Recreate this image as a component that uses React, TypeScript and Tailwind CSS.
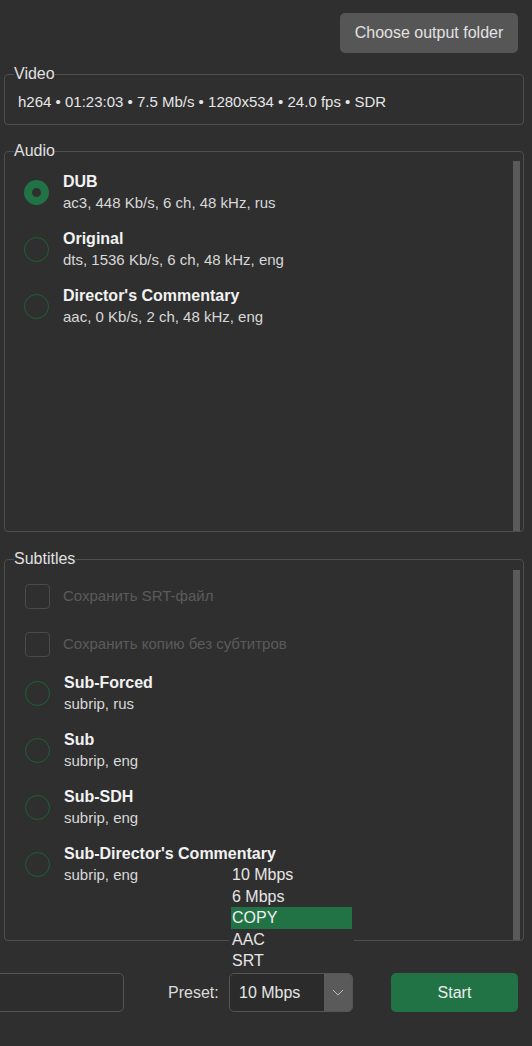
import { useState } from "react";

type Track = { title: string; info: string };

const audioTracks: Track[] = [
  { title: "DUB", info: "ac3, 448 Kb/s, 6 ch, 48 kHz, rus" },
  { title: "Original", info: "dts, 1536 Kb/s, 6 ch, 48 kHz, eng" },
  { title: "Director's Commentary", info: "aac, 0 Kb/s, 2 ch, 48 kHz, eng" },
];

const subTracks: Track[] = [
  { title: "Sub-Forced", info: "subrip, rus" },
  { title: "Sub", info: "subrip, eng" },
  { title: "Sub-SDH", info: "subrip, eng" },
  { title: "Sub-Director's Commentary", info: "subrip, eng" },
];

const presets = ["10 Mbps", "6 Mbps", "COPY", "AAC", "SRT"];

const Radio = ({ checked }: { checked: boolean }) =>
  checked ? (
    <span className="h-[25px] w-[25px] shrink-0 rounded-full border-[8px] border-[#217346]" />
  ) : (
    <span className="h-[25px] w-[25px] shrink-0 rounded-full border-[1.5px] border-[#1d6139]" />
  );

const TrackRow = ({ track, checked }: { track: Track; checked: boolean }) => (
  <div className="flex items-center gap-[14px]">
    <Radio checked={checked} />
    <div className="flex flex-col">
      <span className="text-[16px] font-bold leading-[21px] text-[#f2f2f2]">
        {track.title}
      </span>
      <span className="text-[15px] leading-[22px] text-[#d8d8d8]">
        {track.info}
      </span>
    </div>
  </div>
);

const Checkbox = ({ label }: { label: string }) => (
  <div className="flex h-[25px] items-center gap-[13px]">
    <span className="h-[25px] w-[25px] shrink-0 rounded-[4px] border border-[#4a4a4a]" />
    <span className="text-[15px] text-[#5b5b5b]">{label}</span>
  </div>
);

export default function App() {
  const [audio] = useState(0);
  const [preset] = useState("10 Mbps");

  return (
    <div className="relative h-[1046px] w-[532px] overflow-hidden bg-[#2f2f2f] font-['Liberation_Sans',Arial,sans-serif] text-[#e0e0e0]">
      <div className="flex justify-end pr-[14px] pt-[13px]">
        <button className="h-[40px] w-[178px] rounded-[5px] bg-[#565656] text-[16px] text-[#e2e2e2]">
          Choose output folder
        </button>
      </div>

      <fieldset className="mx-[4px] mt-[12px] w-[520px] rounded-[4px] border border-[#4e4e4e] p-0">
        <legend className="ml-[9px] px-0 text-[16px] leading-[18px]">Video</legend>
        <div className="pb-[14px] pl-[13px] pt-[10px] text-[15px] leading-[17px] text-[#e6e6e6]">
          h264 • 01:23:03 • 7.5 Mb/s • 1280x534 • 24.0 fps • SDR
        </div>
      </fieldset>

      <fieldset className="mx-[4px] mt-[17px] w-[520px] rounded-[4px] border border-[#4e4e4e] p-0">
        <legend className="ml-[9px] px-0 text-[16px] leading-[18px]">Audio</legend>
        <div className="flex h-[371px]">
          <div className="flex flex-1 flex-col gap-[14px] pl-[19px] pt-[11px]">
            {audioTracks.map((t, i) => (
              <TrackRow key={t.title} track={t} checked={i === audio} />
            ))}
          </div>
          <div className="mr-[3px] mt-[1px] w-[7px] bg-[#5a5a5a]" />
        </div>
      </fieldset>

      <fieldset className="mx-[4px] mt-[18px] w-[520px] rounded-[4px] border border-[#4e4e4e] p-0">
        <legend className="ml-[9px] px-0 text-[16px] leading-[18px]">Subtitles</legend>
        <div className="flex h-[372px]">
          <div className="flex flex-1 flex-col pl-[20px] pt-[16px]">
            <div className="flex flex-col gap-[23px]">
              <Checkbox label="Сохранить SRT-файл" />
              <Checkbox label="Сохранить копию без субтитров" />
            </div>
            <div className="mt-[15px] flex flex-col gap-[14px]">
              {subTracks.map((t) => (
                <TrackRow key={t.title} track={t} checked={false} />
              ))}
            </div>
          </div>
          <div className="mr-[3px] mt-[2px] w-[7px] bg-[#5a5a5a]" />
        </div>
      </fieldset>

      <div className="mt-[32px] flex h-[39px] items-center">
        <div className="-ml-[10px] h-[39px] w-[134px] shrink-0 rounded-[5px] border border-[#555555] bg-[#2d2d2d]" />
        <span className="ml-[44px] w-[53px] shrink-0 text-[16px] text-[#dcdcdc]">Preset:</span>
        <div className="ml-[8px] flex h-[39px] w-[124px] shrink-0 overflow-hidden rounded-[5px] border border-[#555555] bg-[#2b2b2b]">
          <span className="flex flex-1 items-center pl-[9px] text-[16px] text-[#e6e6e6]">
            {preset}
          </span>
          <span className="flex w-[28px] items-center justify-center bg-[#5a5a5a]">
            <svg width="12" height="7" viewBox="0 0 12 7" fill="none">
              <polyline points="1,1 6,6 11,1" stroke="#bdbdbd" strokeWidth="1" />
            </svg>
          </span>
        </div>
        <button className="ml-[38px] h-[39px] w-[127px] shrink-0 rounded-[5px] bg-[#217346] text-[16px] text-[#ececec]">
          Start
        </button>
      </div>

      <div className="absolute left-[229px] top-[863px] w-[125px] bg-[#2f2f2f] py-[1px]">
        {presets.map((p) => (
          <div
            key={p}
            className={
              p === "COPY"
                ? "mx-[2px] bg-[#217346] px-[1px] text-[16px] leading-[21.5px] text-[#f0f0f0]"
                : "mx-[2px] px-[1px] text-[16px] leading-[21.5px] text-[#e6e6e6]"
            }
          >
            {p}
          </div>
        ))}
      </div>
    </div>
  );
}
